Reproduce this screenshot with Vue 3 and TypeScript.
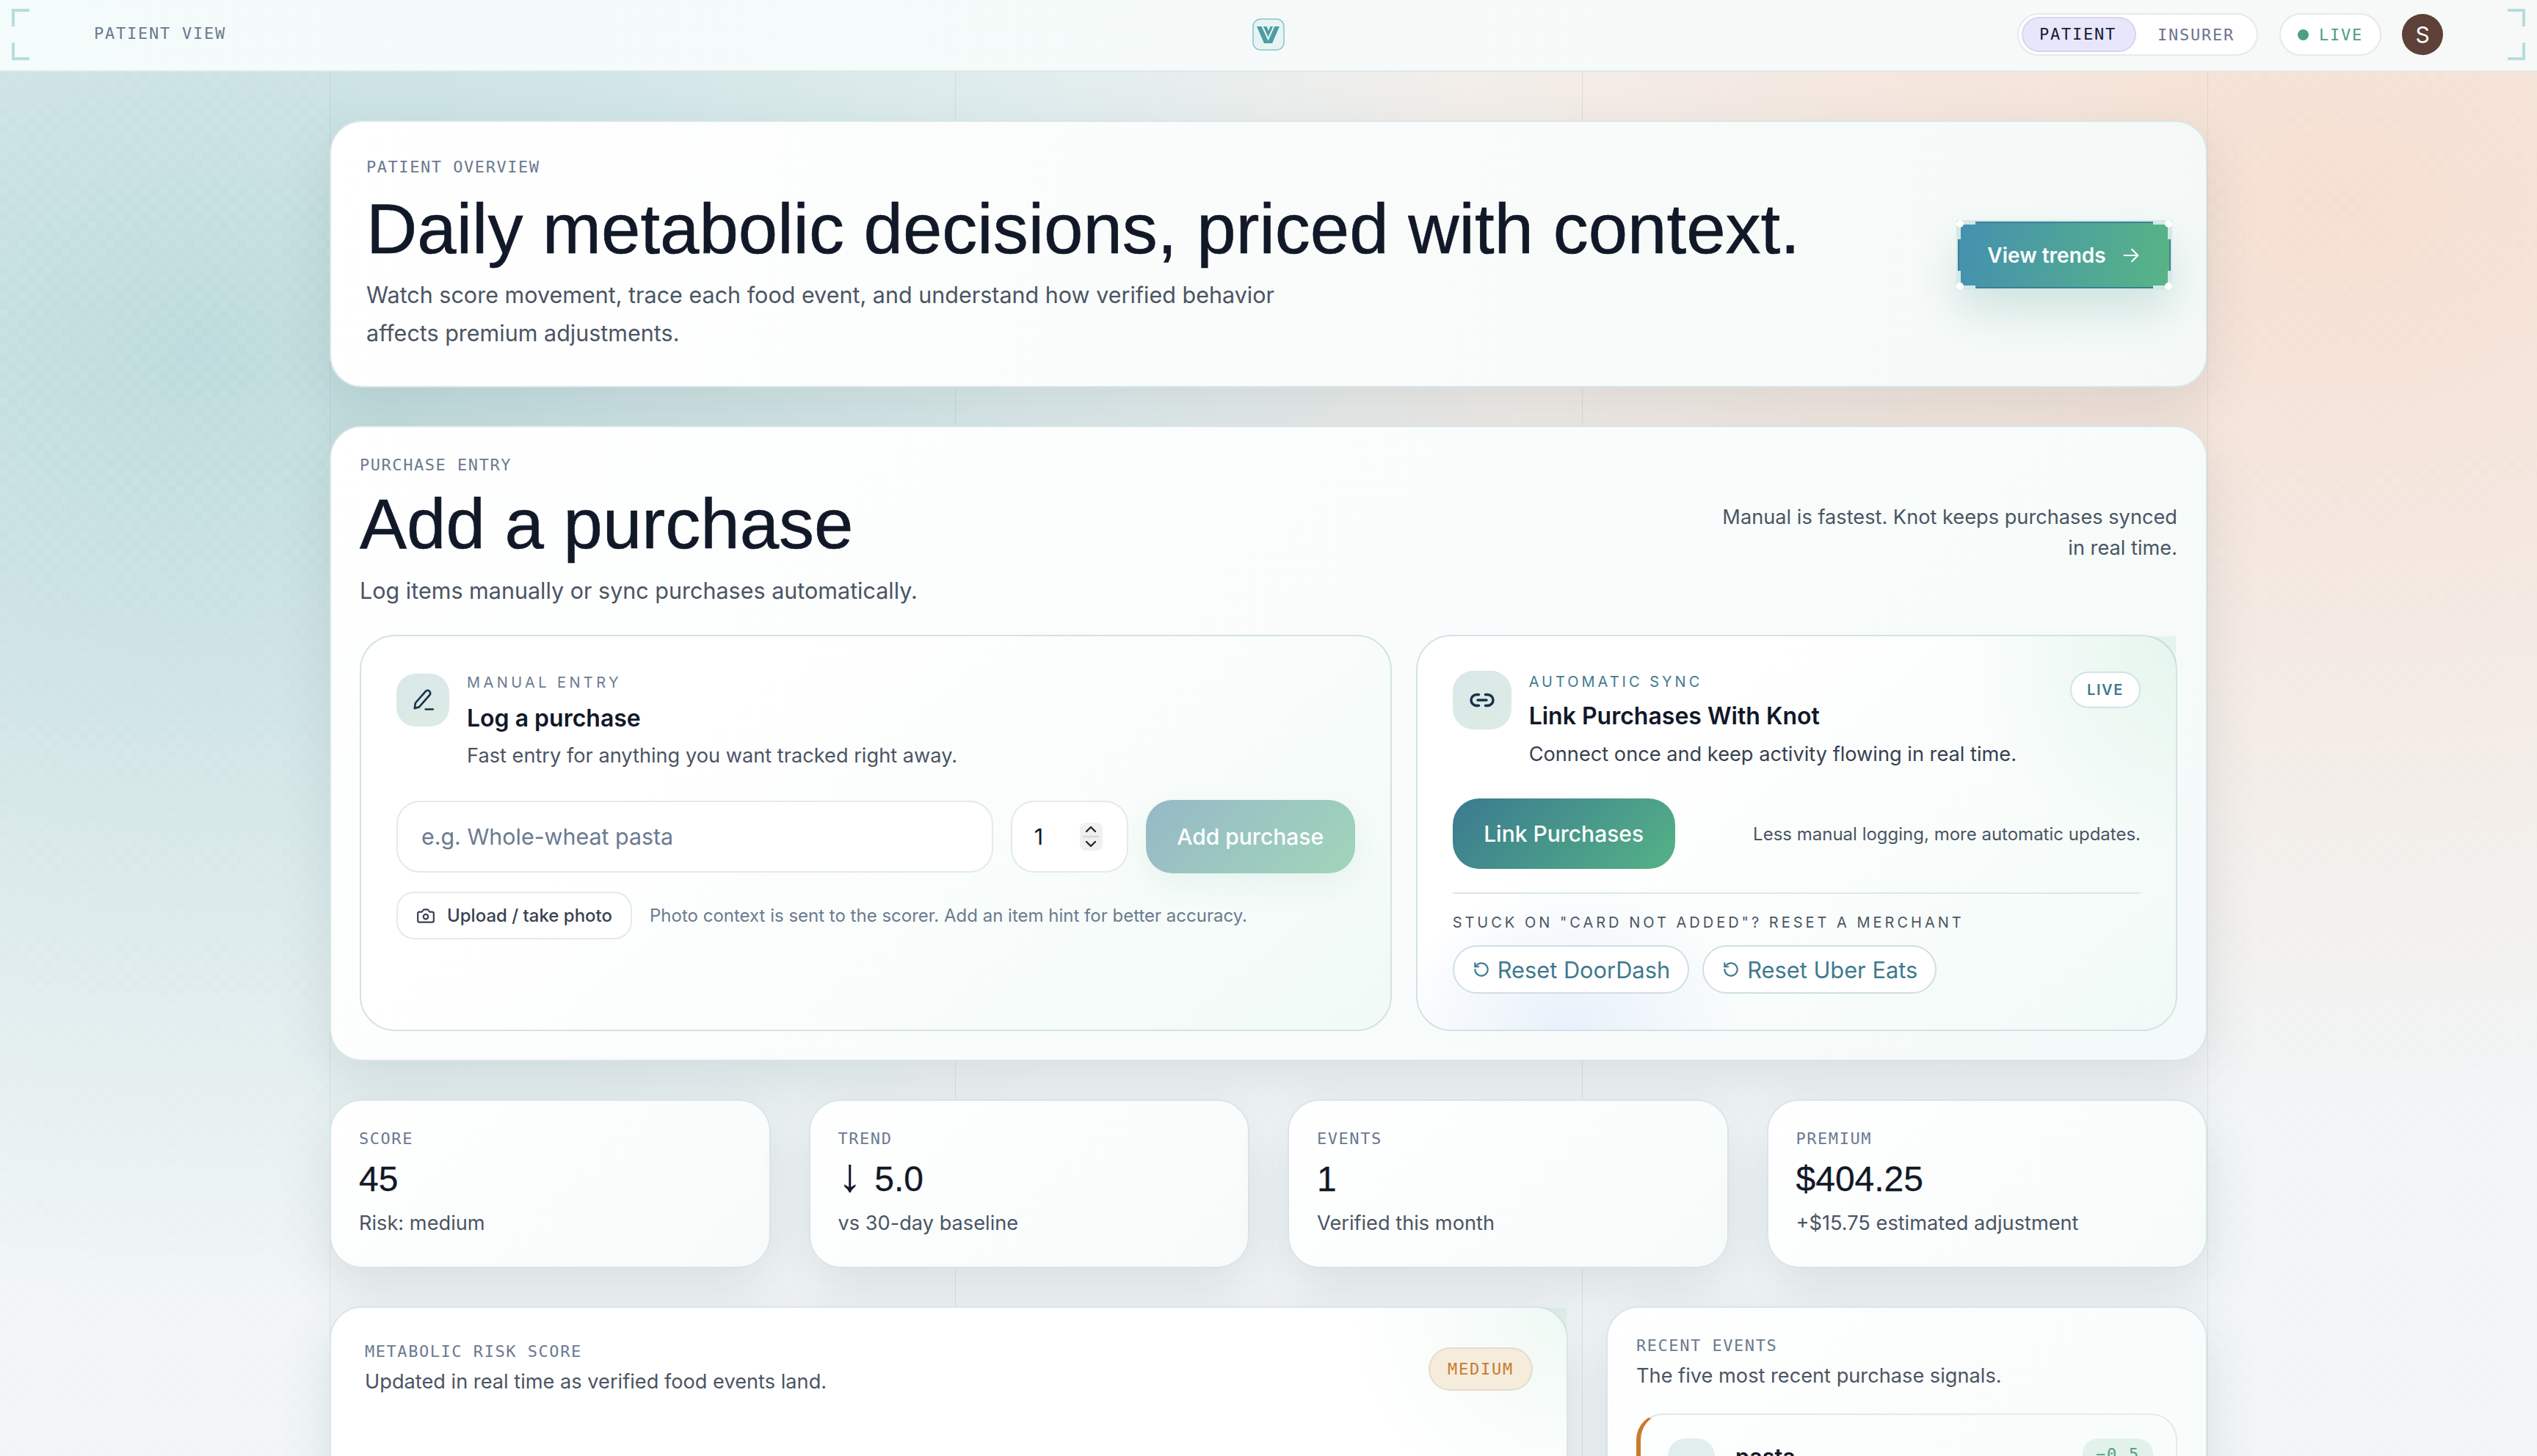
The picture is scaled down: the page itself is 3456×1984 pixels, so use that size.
<script setup lang="ts">
const stats = [
  { label: 'SCORE', arrow: '', value: '45', sub: 'Risk: medium' },
  { label: 'TREND', arrow: '↓', value: '5.0', sub: 'vs 30-day baseline' },
  { label: 'EVENTS', arrow: '', value: '1', sub: 'Verified this month' },
  { label: 'PREMIUM', arrow: '', value: '$404.25', sub: '+$15.75 estimated adjustment' }
]
const merchants = ['Reset DoorDash', 'Reset Uber Eats']
</script>

<template>
  <div class="page">
    <div class="bg-side left"></div>
    <div class="bg-side right"></div>
    <div class="bg-line l1"></div>
    <div class="bg-line l2"></div>
    <div class="bg-line l3"></div>
    <div class="bg-line l4"></div>

    <header class="topbar">
      <span class="mark tl"></span>
      <span class="mark bl"></span>
      <span class="mark tr"></span>
      <span class="mark br"></span>
      <div class="top-left mono">PATIENT VIEW</div>
      <div class="logo">
        <svg width="44" height="44" viewBox="0 0 44 44">
          <rect x="1" y="1" width="42" height="42" rx="10" fill="#e6f4f5" stroke="#8cc4c6" stroke-width="1.5" />
          <path d="M6 11h31L27 34H16Z" fill="#4d9da3" />
          <path d="M13.500 10.500 21.500 28 29.500 10.500" fill="none" stroke="#e6f4f5" stroke-width="2" />
          <path d="M19.500 11h5L22 17Z" fill="#e6f4f5" />
        </svg>
      </div>
      <div class="top-right">
        <div class="switch mono">
          <span class="switch-on">PATIENT</span>
          <span class="switch-off">INSURER</span>
        </div>
        <div class="live mono"><i></i>LIVE</div>
        <div class="avatar">S</div>
      </div>
    </header>

    <main class="content">
      <section class="card hero">
        <div class="hero-text">
          <div class="mono label">PATIENT OVERVIEW</div>
          <h1>Daily metabolic decisions, priced with context.</h1>
          <p>Watch score movement, trace each food event, and understand how verified behavior affects premium adjustments.</p>
        </div>
        <button class="trends">
          <span class="corner c1"></span><span class="corner c2"></span><span class="corner c3"></span><span class="corner c4"></span>
          View trends
          <svg width="28" height="28" viewBox="0 0 24 24" fill="none" stroke="currentColor" stroke-width="1.8" stroke-linecap="round" stroke-linejoin="round">
            <path d="M4 12h16M13 5l7 7-7 7" />
          </svg>
        </button>
      </section>

      <section class="card purchase">
        <div class="purchase-head">
          <div>
            <div class="mono label">PURCHASE ENTRY</div>
            <h2>Add a purchase</h2>
            <p class="lead">Log items manually or sync purchases automatically.</p>
          </div>
          <p class="side-note">Manual is fastest. Knot keeps purchases synced in real time.</p>
        </div>

        <div class="entry-grid">
          <div class="entry manual">
            <div class="entry-head">
              <div class="tile">
                <svg width="40" height="40" viewBox="0 0 32 32" fill="none" stroke="#17324a" stroke-width="2.100" stroke-linecap="round" stroke-linejoin="round">
                  <path d="M7 25l1-6L19 6.500c1.200-1.300 3-1.300 4.200-.2 1.200 1.100 1.300 2.900.2 4.200L12 23.500Z" />
                  <path d="M19 26h8" />
                </svg>
              </div>
              <div>
                <div class="eyebrow">MANUAL ENTRY</div>
                <h3>Log a purchase</h3>
                <p class="entry-desc">Fast entry for anything you want tracked right away.</p>
              </div>
            </div>
            <div class="form-row">
              <div class="field name">e.g. Whole-wheat pasta</div>
              <div class="field qty">
                <span>1</span>
                <div class="stepper">
                  <svg width="22" height="34" viewBox="0 0 22 34" fill="none" stroke="#222831" stroke-width="2.400" stroke-linecap="round" stroke-linejoin="round">
                    <path d="M5 10l6-6 6 6M5 24l6 6 6-6" />
                    <path d="M1 17h20" stroke="#d6d8da" />
                  </svg>
                </div>
              </div>
              <button class="add">Add purchase</button>
            </div>
            <div class="upload-row">
              <button class="upload">
                <svg width="26" height="26" viewBox="0 0 24 24" fill="none" stroke="currentColor" stroke-width="2" stroke-linecap="round" stroke-linejoin="round">
                  <path d="M14.500 4h-5L7 7H4a2 2 0 0 0-2 2v9a2 2 0 0 0 2 2h16a2 2 0 0 0 2-2V9a2 2 0 0 0-2-2h-3Z" />
                  <circle cx="12" cy="13" r="3" />
                </svg>
                Upload / take photo
              </button>
              <span class="hint">Photo context is sent to the scorer. Add an item hint for better accuracy.</span>
            </div>
          </div>

          <div class="entry sync">
            <div class="sync-head">
              <div class="tile big">
                <svg width="36" height="36" viewBox="0 0 24 24" fill="none" stroke="#17324a" stroke-width="2.300" stroke-linecap="round" stroke-linejoin="round">
                  <path d="M9 17H7A5 5 0 0 1 7 7h2" />
                  <path d="M15 7h2a5 5 0 1 1 0 10h-2" />
                  <path d="M8 12h8" />
                </svg>
              </div>
              <div class="sync-title">
                <div class="eyebrow teal">AUTOMATIC SYNC</div>
                <h3>Link Purchases With Knot</h3>
                <p class="entry-desc dark">Connect once and keep activity flowing in real time.</p>
              </div>
              <span class="badge-live">LIVE</span>
            </div>
            <div class="link-row">
              <button class="link-btn">Link Purchases</button>
              <span class="link-note">Less manual logging, more automatic updates.</span>
            </div>
            <div class="reset-box">
              <div class="eyebrow stuck">STUCK ON "CARD NOT ADDED"? RESET A MERCHANT</div>
              <div class="reset-row">
                <button v-for="m in merchants" :key="m" class="reset">
                  <svg width="26" height="26" viewBox="0 0 24 24" fill="none" stroke="currentColor" stroke-width="2" stroke-linecap="round" stroke-linejoin="round">
                    <path d="M4 12a8 8 0 1 0 2.500-5.800L4 8.500" />
                    <path d="M4 4v4.500h4.500" />
                  </svg>
                  {{ m }}
                </button>
              </div>
            </div>
          </div>
        </div>
      </section>

      <section class="stats">
        <div v-for="s in stats" :key="s.label" class="card stat">
          <div class="mono label">{{ s.label }}</div>
          <div class="stat-value"><span v-if="s.arrow" class="stat-arrow">{{ s.arrow + ' ' }}</span>{{ s.value }}</div>
          <div class="stat-sub">{{ s.sub }}</div>
        </div>
      </section>

      <section class="bottom">
        <div class="card risk">
          <div>
            <div class="mono label">METABOLIC RISK SCORE</div>
            <p class="card-desc">Updated in real time as verified food events land.</p>
          </div>
          <span class="medium mono">MEDIUM</span>
        </div>
        <div class="card events">
          <div class="mono label">RECENT EVENTS</div>
          <p class="card-desc">The five most recent purchase signals.</p>
          <div class="event">
            <div class="event-tile mono">MO</div>
            <div class="event-name">pasta</div>
            <div class="event-delta mono">−0.5</div>
          </div>
        </div>
      </section>
    </main>
  </div>
</template>

<style>
html, body {
  margin: 0;
  overflow: hidden;
}
</style>

<style scoped>
.page {
  position: relative;
  height: 1984px;
  overflow: hidden;
  font-family: Inter, "Noto Sans", sans-serif;
  color: #111827;
  background:
    radial-gradient(1800px 1300px at 8% 24%, #bddbdc 0%, rgba(189, 219, 220, 0) 100%),
    radial-gradient(1800px 1250px at 92% 14%, #f6dfd1 0%, rgba(246, 223, 209, 0) 100%),
    #f1f5f6;
}

/* faint checker outside the main column */
.bg-side {
  position: absolute;
  top: 98px;
  bottom: 0;
  width: 449px;
  background-image: repeating-conic-gradient(rgba(255, 255, 255, 0.05) 0 25%, transparent 0 50%);
  background-size: 24px 24px;
}
.bg-side.left { left: 0; }
.bg-side.right { right: 0; }

.bg-line {
  position: absolute;
  top: 98px;
  bottom: 0;
  width: 1px;
  background: rgba(120, 140, 150, 0.16);
}
.l1 { left: 449px; }
.l2 { left: 1301px; }
.l3 { left: 2155px; }
.l4 { left: 3007px; }

.mono {
  font-family: "DejaVu Sans Mono", "Liberation Mono", monospace;
}

.topbar {
  position: relative;
  height: 96px;
  border-bottom: 2px solid #dce8ea;
  background: linear-gradient(90deg, #f4fbfb, #f7f9f8);
  display: grid;
  grid-template-columns: 1fr auto 1fr;
  align-items: center;
  padding: 0 128px;
}
.mark {
  position: absolute;
  width: 20px;
  height: 20px;
  border: 0 solid #b7dcdc;
}
.mark.tl { left: 16px; top: 12px; border-width: 4px 0 0 4px; }
.mark.bl { left: 16px; bottom: 14px; border-width: 0 0 4px 4px; }
.mark.tr { right: 16px; top: 12px; border-width: 4px 4px 0 0; }
.mark.br { right: 16px; bottom: 14px; border-width: 0 4px 4px 0; }

.top-left {
  font-size: 22px;
  letter-spacing: 0.08em;
  color: #6b7a90;
  margin-top: -6px;
}
.logo {
  display: flex;
  margin-top: -2px;
}
.top-right {
  display: flex;
  align-items: center;
  justify-content: flex-end;
  gap: 28px;
  margin-top: -2px;
}
.switch {
  display: flex;
  align-items: center;
  height: 58px;
  box-sizing: border-box;
  margin-right: 1px;
  padding: 4px;
  border: 2px solid #e4e9ec;
  border-radius: 29px;
  background: #fff;
  font-size: 22px;
  letter-spacing: 0.08em;
}
.switch-on {
  width: 156px;
  height: 48px;
  line-height: 44px;
  box-sizing: border-box;
  padding-left: 22px;
  border: 2px solid #d6d6f0;
  border-radius: 24px;
  background: #e8e6fa;
  color: #171b33;
}
.switch-off {
  padding: 0 26px 0 29px;
  color: #6e7590;
}
.live {
  display: flex;
  align-items: center;
  gap: 14px;
  height: 58px;
  box-sizing: border-box;
  padding: 0 23px;
  border: 2px solid #e4e9ec;
  border-radius: 29px;
  background: #fff;
  font-size: 22px;
  letter-spacing: 0.08em;
  color: #4f9f80;
}
.live i {
  width: 15px;
  height: 15px;
  border-radius: 50%;
  background: #4f9f80;
}
.avatar {
  width: 56px;
  height: 56px;
  border-radius: 50%;
  background: #5d4037;
  color: #fff;
  font-size: 30px;
  display: flex;
  align-items: center;
  justify-content: center;
}

.content {
  position: relative;
  width: 2558px;
  margin: 0 auto;
  padding-top: 66px;
  display: flex;
  flex-direction: column;
  gap: 52px;
}

.card {
  box-sizing: border-box;
  border: 2px solid #d8e5e8;
  border-radius: 44px;
  background: linear-gradient(135deg, #ffffff, #f6fbfa);
  box-shadow: 0 28px 70px rgba(60, 85, 95, 0.13);
}

.label {
  font-size: 22px;
  line-height: 30px;
  letter-spacing: 0.07em;
  color: #6b7a90;
}

.hero {
  height: 364px;
  padding: 47px 48px 0;
  display: flex;
  justify-content: space-between;
  align-items: flex-start;
  background: linear-gradient(100deg, #ffffff, #f4f9f7);
}
h1 {
  margin: 14px 0 0;
  font-family: "Liberation Sans", Arial, sans-serif;
  font-weight: 400;
  font-size: 96px;
  line-height: 110px;
  -webkit-text-stroke: 0.6px #111827;
  color: #111827;
  white-space: nowrap;
}
.hero p {
  margin: 9px 0 0;
  width: 1280px;
  font-size: 30.5px;
  line-height: 52px;
  color: #4b5563;
}
.trends {
  position: relative;
  flex: none;
  box-sizing: border-box;
  width: 290px;
  height: 91px;
  margin: 89px 0 0;
  border: 2px solid #3f7f92;
  border-radius: 8px;
  background: linear-gradient(100deg, #4490b0, #58b584) border-box;
  box-shadow: 0 0 0 2px #d2e6e8, 0 30px 60px rgba(60, 140, 130, 0.2);
  color: #fff;
  font-family: inherit;
  font-size: 28px;
  font-weight: 600;
  display: flex;
  align-items: center;
  justify-content: center;
  gap: 20px;
}
.corner {
  position: absolute;
  width: 20px;
  height: 20px;
  border: 0 solid #d4e8e8;
}
.corner::before {
  content: "";
  position: absolute;
  width: 10px;
  height: 10px;
  border-radius: 50%;
  background: #fff;
}
.c1 { left: -4px; top: -4px; border-width: 6px 0 0 6px; }
.c2 { right: -4px; top: -4px; border-width: 6px 6px 0 0; }
.c3 { left: -4px; bottom: -4px; border-width: 0 0 6px 6px; }
.c4 { right: -4px; bottom: -4px; border-width: 0 6px 6px 0; }
.c1::before { left: -6px; top: -6px; }
.c2::before { right: -6px; top: -6px; }
.c3::before { left: -6px; bottom: -6px; }
.c4::before { right: -6px; bottom: -6px; }

.purchase {
  height: 866px;
  padding: 37px 39px;
  background: linear-gradient(135deg, #ffffff, #f4faf9);
}
.purchase-head {
  display: flex;
  justify-content: space-between;
  align-items: flex-start;
}
h2 {
  margin: 10px 0 0;
  font-family: "Liberation Sans", Arial, sans-serif;
  font-weight: 400;
  font-size: 96px;
  line-height: 110px;
  -webkit-text-stroke: 0.6px #111827;
  color: #111827;
}
.lead {
  margin: 12px 0 0;
  font-size: 30.5px;
  line-height: 48px;
  color: #4b5563;
}
.side-note {
  width: 640px;
  margin: 65px 0 0;
  text-align: right;
  font-size: 27.2px;
  line-height: 42px;
  color: #4b5563;
}

.entry-grid {
  display: grid;
  grid-template-columns: 1.355fr 1fr;
  gap: 33px;
  margin-top: 36px;
}
.entry {
  box-sizing: border-box;
  height: 540px;
  border: 2px solid #d2e3e6;
  border-radius: 48px;
  padding: 50px 48px;
  background: linear-gradient(140deg, #ffffff 30%, #f1faf6);
}
.sync {
  position: relative;
  padding: 47px 48px;
  background:
    radial-gradient(240px 200px at 20% 100%, #e8f0fa, rgba(232, 240, 250, 0) 100%),
    linear-gradient(140deg, #ffffff 30%, #f1faf6);
}
/* the glow is not clipped by the rounded corner, same as the reference */
.sync::after,
.risk::after {
  content: "";
  position: absolute;
  top: 0;
  right: 0;
  width: 300px;
  height: 300px;
  background: radial-gradient(circle at 100% 0, rgba(100, 195, 150, 0.13), rgba(100, 195, 150, 0) 70%);
  pointer-events: none;
}
.risk::after {
  background: radial-gradient(circle at 100% 0, rgba(100, 195, 150, 0.1), rgba(100, 195, 150, 0) 70%);
}
.entry-head {
  display: flex;
  gap: 24px;
}
.tile {
  flex: none;
  width: 72px;
  height: 72px;
  margin-top: 1px;
  border-radius: 26px;
  background: linear-gradient(160deg, #dae8e9, #dcebe4);
  display: flex;
  align-items: center;
  justify-content: center;
}
.tile.big {
  width: 80px;
  height: 80px;
  margin-top: 0;
  border-radius: 28px;
}
.eyebrow {
  font-size: 20px;
  line-height: 26px;
  letter-spacing: 0.22em;
  color: #6b7a90;
}
.eyebrow.teal {
  letter-spacing: 0.2em;
  color: #3f7a90;
}
h3 {
  margin: 14px 0 0;
  font-size: 32px;
  line-height: 44px;
  font-weight: 600;
  color: #111827;
}
.entry-desc {
  margin: 9px 0 0;
  font-size: 27.2px;
  line-height: 40px;
  color: #4b5563;
}
.entry-desc.dark { color: #374151; }

.form-row {
  display: flex;
  gap: 24px;
  margin-top: 41px;
}
.field {
  box-sizing: border-box;
  height: 98px;
  border: 2px solid #e4e9ec;
  border-radius: 32px;
  background: #fff;
  display: flex;
  align-items: center;
}
.name {
  flex: 1;
  padding-left: 32px;
  font-size: 30.4px;
  color: #6b7a90;
}
.qty {
  flex: none;
  width: 160px;
  padding: 0 33px 0 30px;
  font-size: 30.4px;
  color: #111827;
  justify-content: space-between;
}
.stepper {
  width: 31px;
  height: 38px;
  border-radius: 8px;
  background: #f0f0f0;
  display: flex;
  align-items: center;
  justify-content: center;
}
.add {
  flex: none;
  width: 285px;
  height: 100px;
  margin-top: -1px;
  border: 0;
  border-radius: 36px;
  background: linear-gradient(135deg, #96b9c6, #a1d5ba);
  box-shadow: 0 16px 40px rgba(70, 140, 130, 0.08);
  color: #fff;
  font-family: inherit;
  font-size: 30px;
  font-weight: 500;
}
.upload-row {
  display: flex;
  align-items: center;
  gap: 24px;
  margin-top: 25px;
}
.upload {
  flex: none;
  box-sizing: border-box;
  width: 321px;
  height: 65px;
  border: 2px solid #e4e9ec;
  border-radius: 24px;
  background: #fff;
  color: #374151;
  font-family: inherit;
  font-size: 24px;
  font-weight: 500;
  display: flex;
  align-items: center;
  justify-content: center;
  gap: 16px;
}
.hint {
  font-size: 24px;
  color: #6b7a90;
}

.sync-head {
  position: relative;
  display: flex;
  gap: 24px;
}
.sync-title {
  padding-top: 2px;
}
.sync h3 {
  margin-top: 12px;
}
.sync .entry-desc {
  margin-top: 10px;
}
.badge-live {
  position: absolute;
  z-index: 1;
  right: 0;
  top: 1px;
  box-sizing: border-box;
  width: 96px;
  height: 50px;
  border: 2px solid #d2e3e6;
  border-radius: 25px;
  background: #fff;
  color: #3f7a90;
  font-size: 20px;
  font-weight: 600;
  letter-spacing: 0.08em;
  display: flex;
  align-items: center;
  justify-content: center;
}
.link-row {
  display: flex;
  align-items: center;
  justify-content: space-between;
  margin-top: 40px;
}
.link-btn {
  width: 303px;
  height: 96px;
  border: 0;
  border-radius: 36px;
  background: linear-gradient(135deg, #3a7a90, #55b285);
  color: #fff;
  font-family: inherit;
  font-size: 30px;
  font-weight: 500;
}
.link-note {
  font-size: 24px;
  color: #4b5563;
}
.reset-box {
  margin-top: 32px;
  border-top: 2px solid #dbe8ea;
  padding-top: 26px;
}
.eyebrow.stuck {
  letter-spacing: 0.2em;
  color: #4b5563;
}
.reset-row {
  display: flex;
  gap: 18px;
  margin-top: 18px;
}
.reset {
  box-sizing: border-box;
  height: 66px;
  padding: 0 24px;
  border: 2px solid #cfdfe4;
  border-radius: 33px;
  background: #fff;
  color: #3f7a90;
  font-family: inherit;
  font-size: 30.8px;
  display: flex;
  align-items: center;
  gap: 9px;
}

.stats {
  display: grid;
  grid-template-columns: repeat(4, 1fr);
  gap: 52px;
}
.stat {
  height: 230px;
  padding: 37px 38px 0;
}
.stat-value {
  margin-top: 10px;
  font-family: "Liberation Sans", Arial, sans-serif;
  font-size: 48px;
  line-height: 60px;
  -webkit-text-stroke: 0.3px #111827;
  color: #111827;
}
.stat-arrow {
  font-size: 64px;
  line-height: 0;
}
.stat-sub {
  margin-top: 10px;
  font-size: 27.2px;
  line-height: 40px;
  color: #4b5563;
}

.bottom {
  display: grid;
  grid-template-columns: 1687px 819px;
  gap: 52px;
}
.risk {
  position: relative;
  height: 400px;
  padding: 45px 46px 0;
  display: flex;
  justify-content: space-between;
  align-items: flex-start;
  background: #fff;
}
.card-desc {
  margin: 6px 0 0;
  font-size: 27.2px;
  line-height: 40px;
  color: #4b5563;
}
.medium {
  position: relative;
  z-index: 1;
  box-sizing: border-box;
  width: 142px;
  height: 59px;
  margin: 9px 0 0;
  border: 2px solid #e6dcc8;
  border-radius: 30px;
  background: #f5ecdc;
  color: #c97a2e;
  font-size: 22px;
  letter-spacing: 0.08em;
  display: flex;
  align-items: center;
  justify-content: center;
}
.events {
  height: 400px;
  padding: 37px 39px 0;
}
.event {
  box-sizing: border-box;
  height: 200px;
  margin-top: 31px;
  padding: 32px 31px 0 37px;
  border: 2px solid #e4e9ec;
  border-left: 6px solid #c97a2e;
  border-radius: 36px;
  display: flex;
  align-items: flex-start;
  gap: 28px;
}
.event-tile {
  flex: none;
  width: 64px;
  height: 64px;
  border-radius: 24px;
  background: #e2eeee;
  color: #3f7a90;
  font-size: 22px;
  display: flex;
  align-items: center;
  justify-content: center;
}
.event-name {
  flex: 1;
  padding-top: 5px;
  font-size: 30.4px;
  font-weight: 600;
  line-height: 40px;
}
.event-delta {
  padding: 9px 18px;
  border-radius: 24px;
  background: #e2f2ea;
  color: #4f9f80;
  font-size: 22px;
  letter-spacing: 0.08em;
}
</style>
